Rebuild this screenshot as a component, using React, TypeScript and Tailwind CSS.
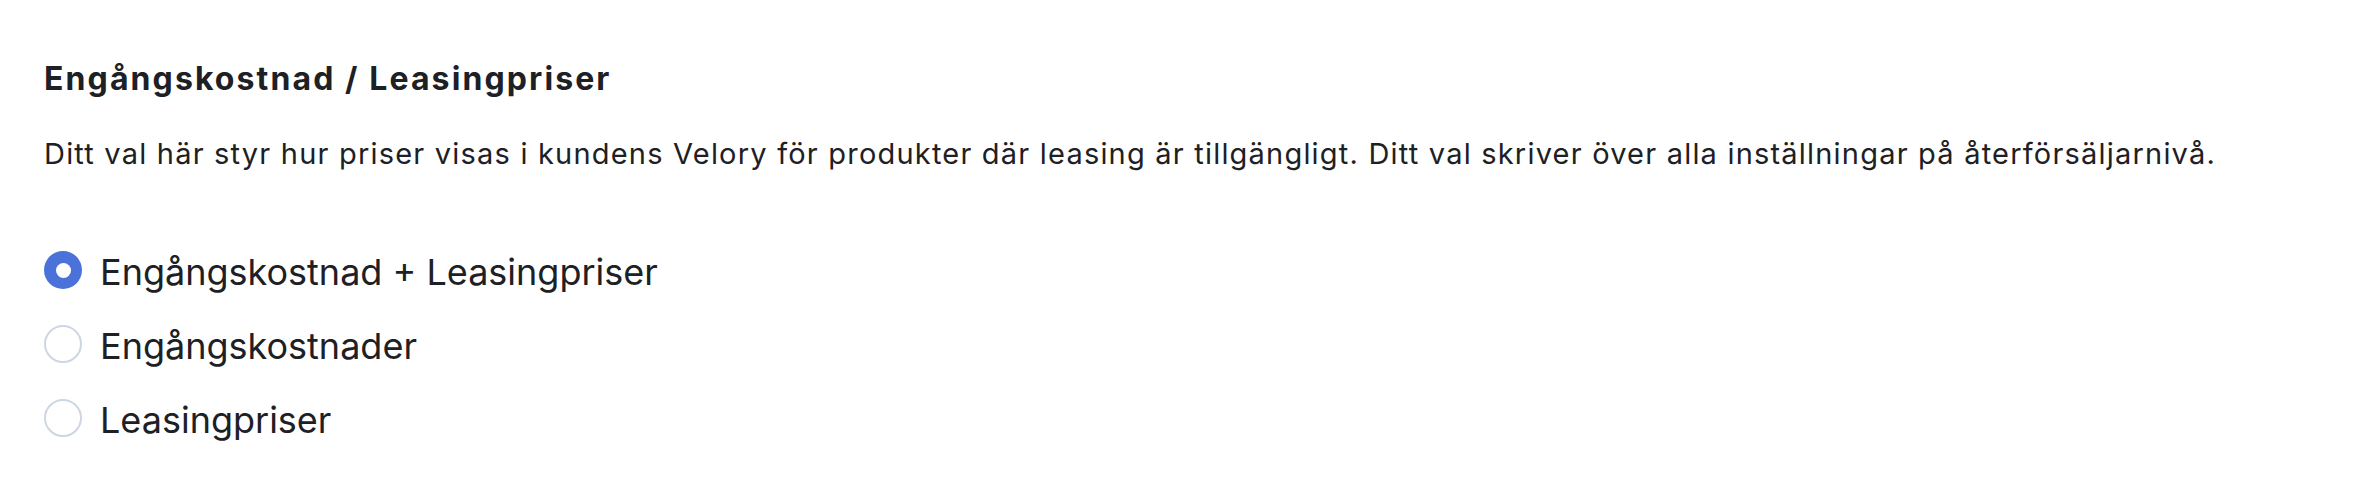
import React, { useState } from "react";

const options = [
  "Engångskostnad + Leasingpriser",
  "Engångskostnader",
  "Leasingpriser",
];

export default function App() {
  const [selected, setSelected] = useState(0);

  return (
    <div
      className="min-h-[504px] w-full bg-white pl-[44px] pt-[61px] text-[#1d2024]"
      style={{ fontFamily: "Inter, 'Noto Sans', sans-serif" }}
    >
      <h2 className="text-[32px] font-bold leading-[36px] tracking-[2.1px]">
        Engångskostnad / Leasingpriser
      </h2>
      <p className="mt-[37px] text-[29px] leading-[40px] tracking-[1.2px]">
        Ditt val här styr hur priser visas i kundens Velory för produkter där leasing är tillgängligt. Ditt val skriver över alla inställningar på återförsäljarnivå.
      </p>

      <div className="mt-[74px] flex flex-col gap-[26px]">
        {options.map((label, i) => {
          const active = i === selected;
          return (
            <label
              key={label}
              className="flex cursor-pointer items-center gap-[18px]"
              onClick={() => setSelected(i)}
            >
              <span
                className={
                  active
                    ? "mb-[4px] flex h-[38px] w-[38px] items-center justify-center rounded-full bg-[#4a72d9]"
                    : "mb-[4px] h-[38px] w-[38px] rounded-full border-2 border-[#cdd6e2] bg-white"
                }
              >
                {active && <span className="h-[15px] w-[15px] rounded-full bg-white" />}
              </span>
              <span className="text-[36px] leading-[48px]">{label}</span>
            </label>
          );
        })}
      </div>
    </div>
  );
}
